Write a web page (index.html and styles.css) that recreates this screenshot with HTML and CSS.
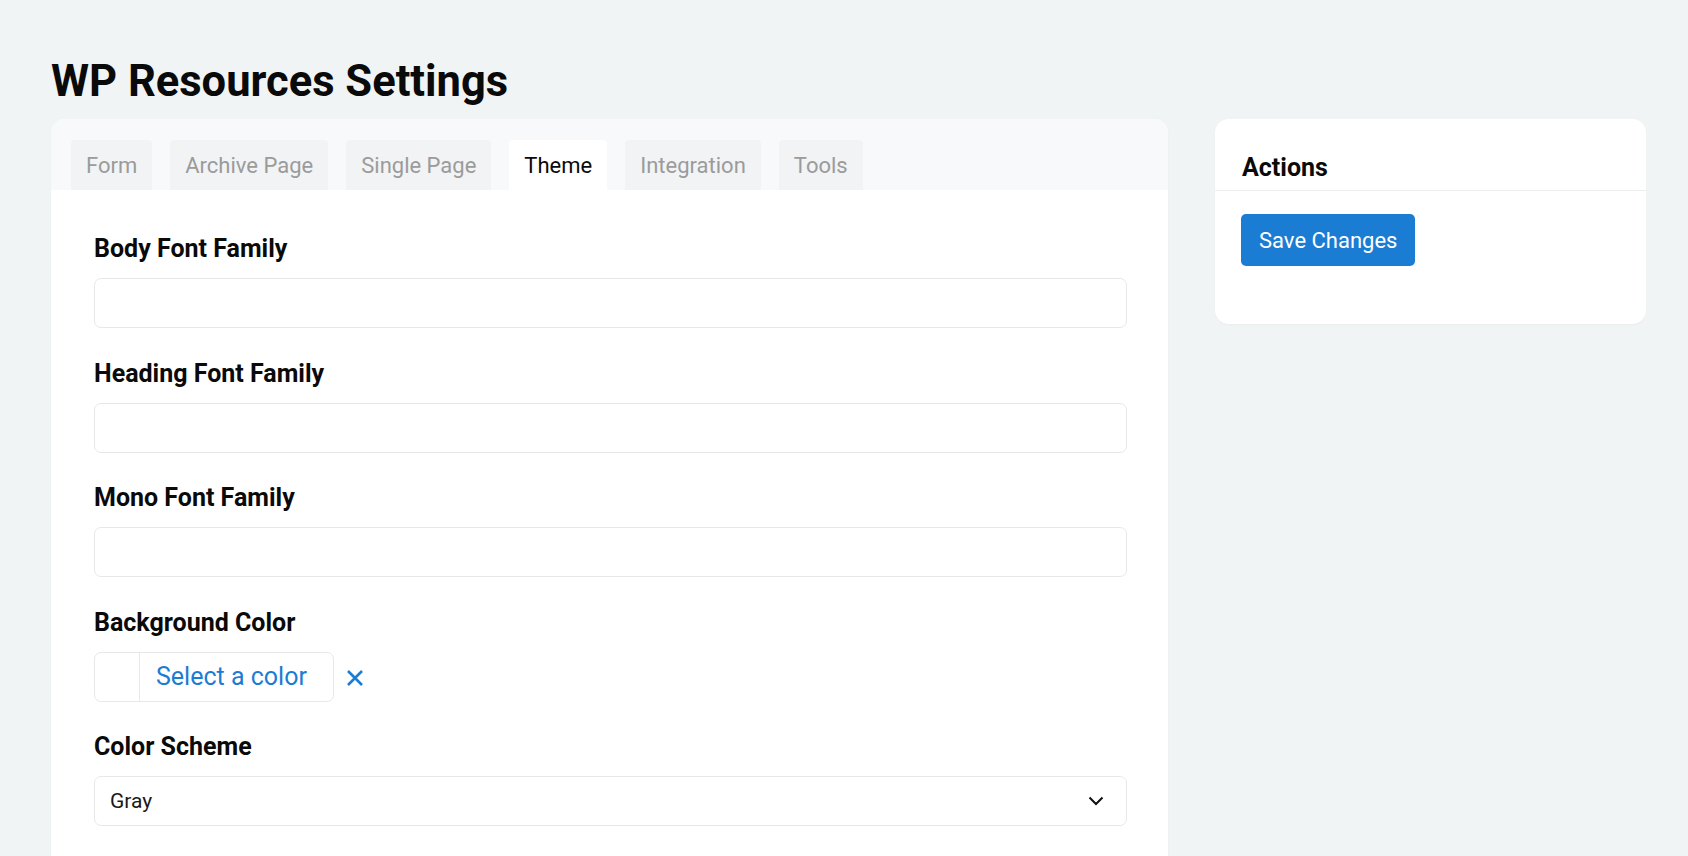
FILE: index.html
```html
<!DOCTYPE html>
<html lang="en">
<head>
<meta charset="utf-8">
<title>WP Resources Settings</title>
<link rel="stylesheet" href="styles.css">
</head>
<body>
<div class="wrap">
  <h1 class="page-title">WP Resources Settings</h1>
  <div class="layout">
    <div class="card main-card">
      <div class="tabs">
        <div class="tab">Form</div>
        <div class="tab">Archive Page</div>
        <div class="tab">Single Page</div>
        <div class="tab active">Theme</div>
        <div class="tab">Integration</div>
        <div class="tab">Tools</div>
      </div>
      <div class="panel">
        <div class="field">
          <label class="field-label">Body Font Family</label>
          <div class="input"></div>
        </div>
        <div class="field">
          <label class="field-label">Heading Font Family</label>
          <div class="input"></div>
        </div>
        <div class="field">
          <label class="field-label">Mono Font Family</label>
          <div class="input"></div>
        </div>
        <div class="field">
          <label class="field-label">Background Color</label>
          <div class="color-row">
            <div class="color-btn">
              <span class="swatch"></span>
              <span class="color-text">Select a color</span>
            </div>
            <svg class="clear-icon" width="18" height="18" viewBox="0 0 18 18" aria-hidden="true">
              <path d="M2 2 L16 16 M16 2 L2 16" stroke="#1b7cd3" stroke-width="2.6" stroke-linecap="butt" fill="none"/>
            </svg>
          </div>
        </div>
        <div class="field">
          <label class="field-label">Color Scheme</label>
          <div class="input select">
            <span class="select-value">Gray</span>
            <svg class="chevron" width="16" height="10" viewBox="0 0 16 10" aria-hidden="true">
              <path d="M1.5 1.5 L8 8 L14.5 1.5" stroke="#111" stroke-width="2" fill="none" stroke-linejoin="miter"/>
            </svg>
          </div>
        </div>
      </div>
    </div>
    <div class="card side-card">
      <div class="side-head">
        <h2 class="side-title">Actions</h2>
      </div>
      <div class="side-body">
        <button class="btn-primary" type="button">Save Changes</button>
      </div>
    </div>
  </div>
</div>
</body>
</html>
```
FILE: styles.css
```css
html, body {
  margin: 0;
  padding: 0;
  overflow: hidden;
}
body {
  background: #f1f4f5;
  font-family: Roboto, "Liberation Sans", Arial, sans-serif;
  color: #111;
}
.wrap {
  padding: 56px 42px 0 51px;
}
.page-title {
  margin: 0 0 12px;
  font-size: 43.5px;
  line-height: 51px;
  font-weight: 700;
  color: #0a0a0a;
}
.layout {
  display: flex;
  gap: 47px;
  align-items: flex-start;
}
.card {
  background: #fff;
  border-radius: 14px;
  box-shadow: 0 1px 2px rgba(0, 0, 0, 0.03);
}
.main-card {
  flex: 1;
  overflow: hidden;
}
.side-card {
  width: 431px;
  flex: none;
}
.tabs {
  display: flex;
  gap: 18px;
  padding: 21px 20px 0;
  background: #f8f9fa;
}
.tab {
  padding: 13px 15px 12px;
  font-size: 22px;
  line-height: 25px;
  color: #9b9b9b;
  background: #f1f3f5;
  border-radius: 4px 4px 0 0;
}
.tab.active {
  background: #fff;
  color: #0a0a0a;
}
.panel {
  padding: 44px 41px 40px 43px;
}
.field {
  margin-bottom: 30.6px;
}
.field-label {
  display: block;
  font-size: 25px;
  line-height: 29px;
  font-weight: 700;
  color: #0a0a0a;
  margin-bottom: 15px;
}
.input {
  height: 48px;
  border: 1px solid #e6e8ea;
  border-radius: 7px;
  background: #fff;
}
.select {
  display: flex;
  align-items: center;
  justify-content: space-between;
  padding: 0 22px 0 15px;
}
.select-value {
  font-size: 21px;
  color: #1a1a1a;
}
.chevron {
  display: block;
}
.color-row {
  display: flex;
  align-items: center;
  gap: 12px;
}
.color-btn {
  display: flex;
  height: 48px;
  border: 1px solid #e6e8ea;
  border-radius: 7px;
  overflow: hidden;
}
.swatch {
  width: 44px;
  border-right: 1px solid #e6e8ea;
}
.color-text {
  display: flex;
  align-items: center;
  padding: 0 26px 0 16px;
  font-size: 25px;
  color: #1b7cd3;
}
.clear-icon {
  display: block;
  margin-top: 2px;
}
.side-head {
  padding: 34px 26px 8px 27px;
  border-bottom: 1px solid #eceef0;
}
.side-title {
  margin: 0;
  font-size: 25px;
  line-height: 29px;
  font-weight: 700;
  color: #0a0a0a;
}
.side-body {
  padding: 23px 26px 58px;
}
.btn-primary {
  display: block;
  height: 52px;
  padding: 0 18px;
  border: none;
  border-radius: 5px;
  background: #1b7cd3;
  color: #fff;
  font-family: Roboto, "Liberation Sans", Arial, sans-serif;
  font-size: 22px;
}
```
